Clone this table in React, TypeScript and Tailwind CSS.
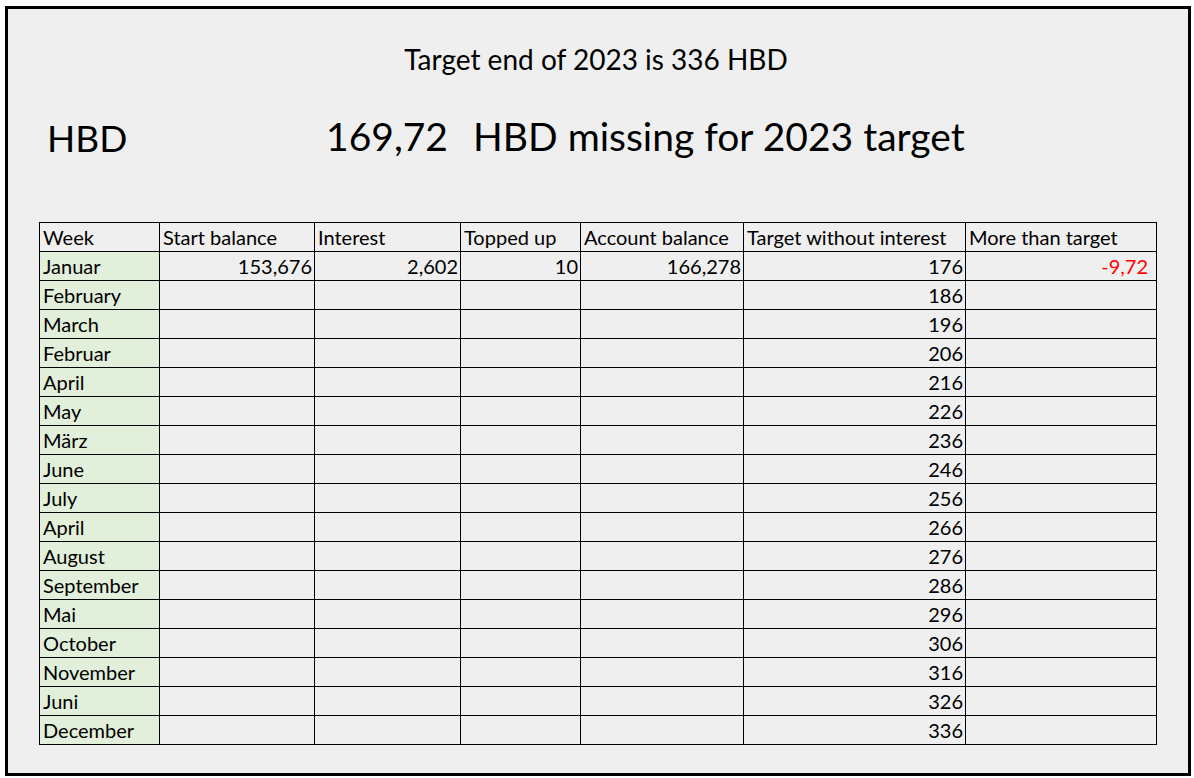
const months = [
  "Januar",
  "February",
  "March",
  "Februar",
  "April",
  "May",
  "März",
  "June",
  "July",
  "April",
  "August",
  "September",
  "Mai",
  "October",
  "November",
  "Juni",
  "December",
];

const headers = [
  "Week",
  "Start balance",
  "Interest",
  "Topped up",
  "Account balance",
  "Target without interest",
  "More than target",
];

const widths = ["w-[120px]", "w-[155px]", "w-[146px]", "w-[120px]", "w-[163px]", "w-[222px]", "w-[191px]"];

const font = { fontFamily: "Lato, 'Noto Sans', sans-serif" };

export default function App() {
  return (
    <div className="w-[1194px] h-[778px] bg-white pt-[6px] pl-[5px]" style={font}>
      <div className="w-[1186px] h-[770px] border-[3px] border-black bg-[#efefef] flex flex-col text-black">
        {/* title */}
        <div className="h-[75px] flex items-end justify-center text-[28px] leading-none pb-[11px] pr-[4px]">
          Target end of 2023 is 336 HBD
        </div>

        {/* summary line */}
        <div className="h-[80px] flex items-end text-[39px] leading-none pb-[8px]">
          <span className="w-[310px] pl-[39px] text-[37px]">HBD</span>
          <span className="w-[130px] text-right">169,72</span>
          <span className="pl-[25px]">HBD missing for 2023 target</span>
        </div>

        {/* table */}
        <div className="pt-[58px] pl-[31px]">
          <table className="border-collapse table-fixed text-[20px] leading-none">
            <thead>
              <tr className="h-[29px]">
                {headers.map((h, i) => (
                  <td key={h} className={`${widths[i]} border border-black px-[3px] align-bottom pb-[4px] whitespace-nowrap`}>
                    {h}
                  </td>
                ))}
              </tr>
            </thead>
            <tbody>
              {months.map((m, r) => (
                <tr key={r} className="h-[29px]">
                  <td className="border border-black bg-[#e2efda] px-[3px] align-bottom pb-[4px]">{m}</td>
                  <td className="border border-black text-right px-[2px] align-bottom pb-[4px]">{r === 0 ? "153,676" : ""}</td>
                  <td className="border border-black text-right px-[2px] align-bottom pb-[4px]">{r === 0 ? "2,602" : ""}</td>
                  <td className="border border-black text-right px-[2px] align-bottom pb-[4px]">{r === 0 ? "10" : ""}</td>
                  <td className="border border-black text-right px-[2px] align-bottom pb-[4px]">{r === 0 ? "166,278" : ""}</td>
                  <td className="border border-black text-right px-[2px] align-bottom pb-[4px]">{176 + r * 10}</td>
                  <td className="border border-black text-right px-[8px] align-bottom pb-[4px] text-[#ff0000]">{r === 0 ? "-9,72" : ""}</td>
                </tr>
              ))}
            </tbody>
          </table>
        </div>
      </div>
    </div>
  );
}
